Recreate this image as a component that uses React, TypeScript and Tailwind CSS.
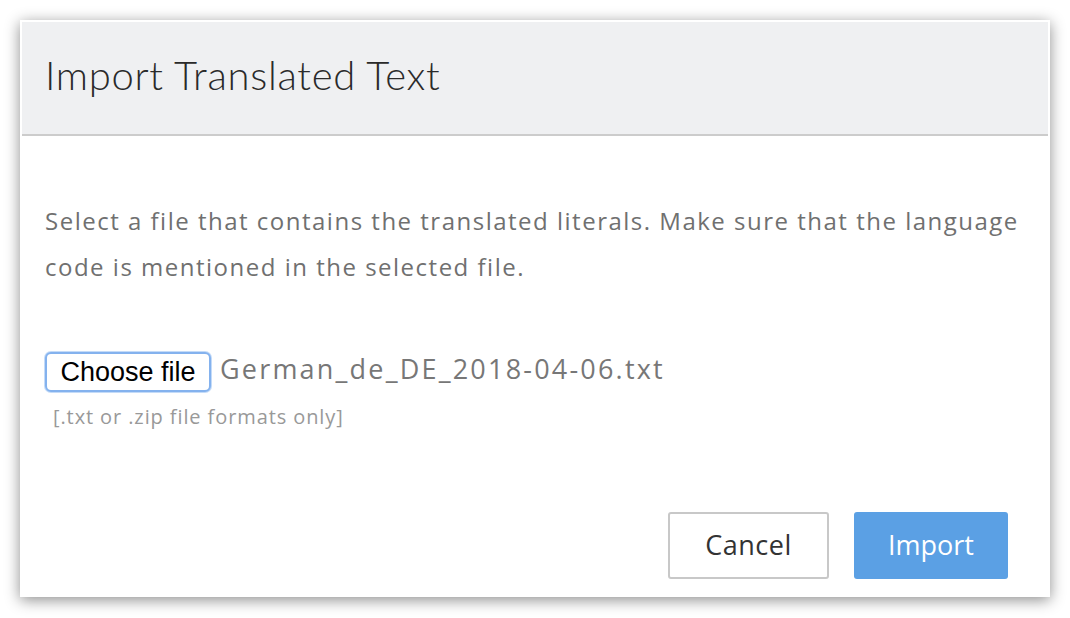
import React from "react";

export default function App() {
  const font = { fontFamily: "'Open Sans', Lato, sans-serif" };
  return (
    <div className="w-[1070px] h-[618px] bg-white pt-[20px] pl-[20px]" style={font}>
      <div className="w-[1030px] h-[577px] bg-white p-[2px] pb-0 flex flex-col shadow-[0_3px_14px_rgba(0,0,0,0.45)]">
        <div className="h-[114px] bg-[#eff0f2] border-b-2 border-[#cccccc] flex items-center pl-[23px] pb-[7px]">
          <h1 className="text-[40px] text-[#2a2a2a] font-light leading-none tracking-[0.7px] font-['Lato',sans-serif]">Import Translated Text</h1>
        </div>
        <div className="flex-1 flex flex-col pl-[23px] pr-[10px]">
          <p className="mt-[62px] text-[24px] leading-[46px] text-[#707070] tracking-[1.5px]">
            Select a file that contains the translated literals. Make sure that the language code is mentioned in the selected file.
          </p>
          <div className="mt-[62px] flex items-center">
            <button className="h-[40px] w-[166px] rounded-[6px] border-2 border-[#84b2ee] ring-1 ring-[#c4dbf8] bg-white text-[27px] text-black leading-none font-['Liberation_Sans',Arial,sans-serif]">
              Choose file
            </button>
            <span className="ml-[9px] text-[27px] text-[#777] -mt-[6px] tracking-[2.2px]">German_de_DE_2018-04-06.txt</span>
          </div>
          <div className="ml-[8px] mt-[10px] text-[20px] text-[#999] tracking-[0.9px]">[.txt or .zip file formats only]</div>
          <div className="mt-auto mb-[18px] flex justify-end gap-[25px] pr-[30px]">
            <button className="w-[161px] h-[67px] rounded-[3px] border-2 border-[#c8c8c8] bg-white text-[27px] text-[#333] tracking-[0.5px]">Cancel</button>
            <button className="w-[154px] h-[67px] rounded-[3px] bg-[#5ba0e4] text-[27px] text-white">Import</button>
          </div>
        </div>
      </div>
    </div>
  );
}
